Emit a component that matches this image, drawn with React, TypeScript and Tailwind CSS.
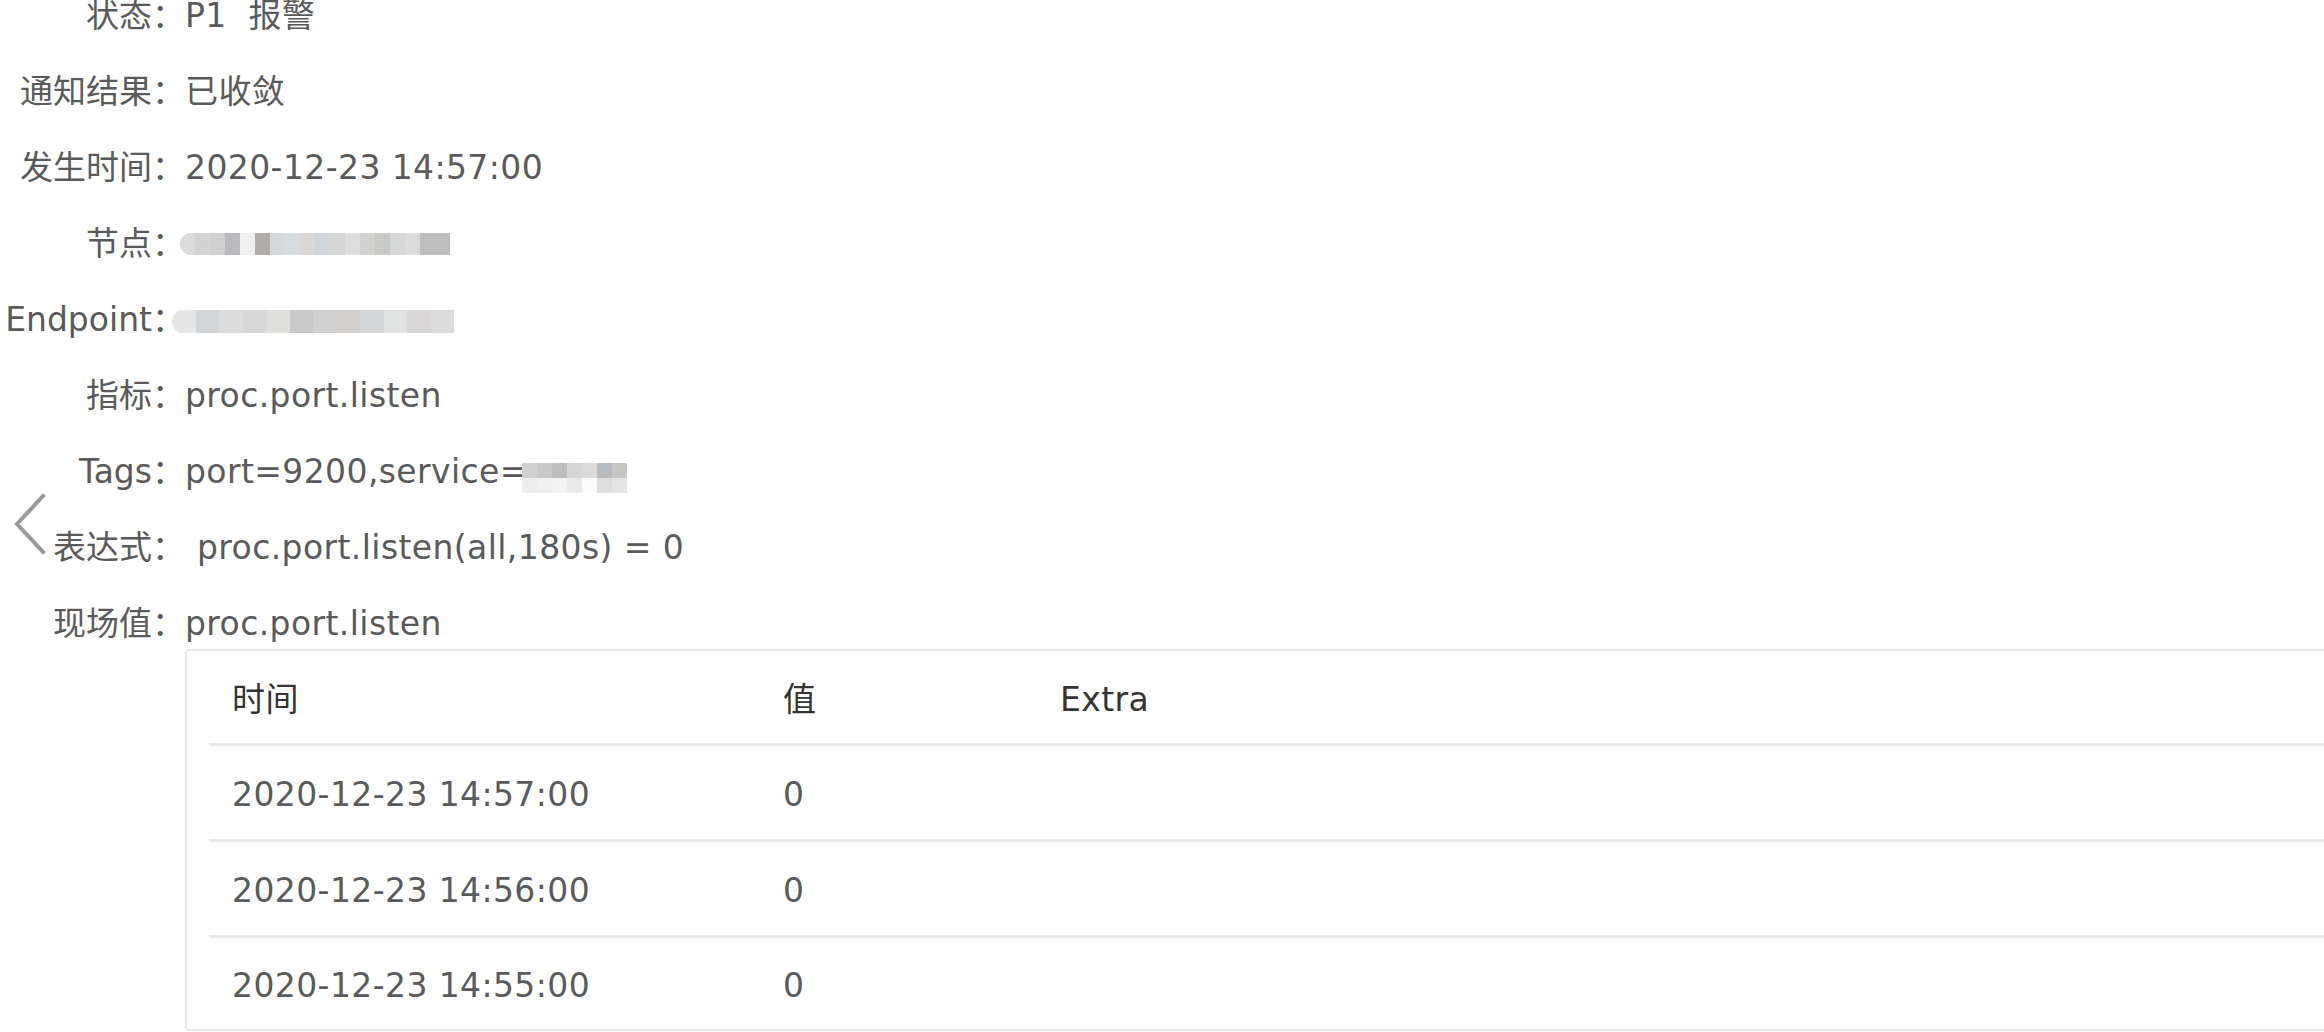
import React from 'react';

type Row = {
  label: string;
  value?: string;
  blur?: 'node' | 'endpoint' | 'tags';
  indent?: boolean;
};

const rows: Row[] = [
  { label: '状态：', value: 'P1  报警' },
  { label: '通知结果：', value: '已收敛' },
  { label: '发生时间：', value: '2020-12-23 14:57:00' },
  { label: '节点：', blur: 'node' },
  { label: 'Endpoint：', blur: 'endpoint' },
  { label: '指标：', value: 'proc.port.listen' },
  { label: 'Tags：', value: 'port=9200,service=', blur: 'tags' },
  { label: '表达式：', value: 'proc.port.listen(all,180s) = 0', indent: true },
  { label: '现场值：', value: 'proc.port.listen' },
];

const samples = [
  { time: '2020-12-23 14:57:00', value: '0' },
  { time: '2020-12-23 14:56:00', value: '0' },
  { time: '2020-12-23 14:55:00', value: '0' },
];

// pixelated blobs standing in for masked hostnames
const nodeBlocks = ['#dcdcdc', '#d3d3d3', '#d1d0d0', '#b9b8bc', '#eef0f0', '#b1ada8', '#d6d8da', '#d5dcde', '#d9d8d6', '#cfd5d8', '#d6d5d3', '#dcdedf', '#d3d1cf', '#c8cac6', '#d6d7d7', '#dddcda', '#bdbdbf', '#bebebf'];
const endpointBlocks = ['#e6e6e6', '#d2d5d7', '#dcdcdd', '#d9d7d8', '#dfe0dc', '#c8c9c8', '#d0d0d1', '#d3d0ce', '#d5d6d8', '#e0e1e1', '#d8d6d7', '#dcdcdd'];
const tagsTop = ['#d0d0d0', '#c8c8c8', '#bdbdbd', '#d6d6d8', '#dcdad8', '#b8bbbe', '#c6c6c4'];
const tagsBottom = ['#ececec', '#f0f0f0', '#f2f2f2', '#e8e9eb', '#fbfbfb', '#dededf', '#e4e4e4'];

const Blocks: React.FC<{ colors: string[]; cell: string; className?: string }> = ({ colors, cell, className = '' }) => (
  <div className={`flex overflow-hidden rounded-l-full blur-[0.6px] ${className}`}>
    {colors.map((c, i) => (
      <div key={i} className={cell} style={{ backgroundColor: c }} />
    ))}
  </div>
);

const Masked: React.FC<{ kind: 'node' | 'endpoint' | 'tags' }> = ({ kind }) => {
  if (kind === 'node') {
    return <Blocks colors={nodeBlocks} cell="h-[22px] w-[15px]" className="-ml-[5px]" />;
  }
  if (kind === 'endpoint') {
    return <Blocks colors={endpointBlocks} cell="h-[23px] w-[23.5px]" className="-ml-[13px] mt-[3px]" />;
  }
  return (
    <div className="-ml-[6px] mt-[12px] flex flex-col blur-[0.6px]">
      <div className="flex">
        {tagsTop.map((c, i) => (
          <div key={i} className="h-[15px] w-[15px]" style={{ backgroundColor: c }} />
        ))}
      </div>
      <div className="flex">
        {tagsBottom.map((c, i) => (
          <div key={i} className="h-[15px] w-[15px]" style={{ backgroundColor: c }} />
        ))}
      </div>
    </div>
  );
};

export default function App() {
  return (
    <div className="relative h-[1032px] w-full overflow-hidden bg-white font-['DejaVu_Sans','Noto_Sans_CJK_SC',sans-serif] text-[33px] tracking-[0.4px] text-[#5a5a5a]">
      <div className="-mt-[22px] flex flex-col">
        {rows.map((row, i) => (
          <div
            key={row.label}
            className={`flex items-center leading-[76px] ${i === rows.length - 1 ? 'h-[63px] items-start' : 'h-[76px]'}`}
          >
            <div className="w-[185px] shrink-0 whitespace-nowrap text-right tracking-normal">{row.label}</div>
            {row.value && (
              <div className={`whitespace-pre ${row.indent ? 'pl-[12px]' : ''}`}>{row.value}</div>
            )}
            {row.blur && <Masked kind={row.blur} />}
          </div>
        ))}
      </div>

      {/* 现场值 table */}
      <div className="ml-[185px] w-[2300px] rounded-[4px] border-2 border-[#e8e8e8] pl-[22px]">
        <div className="flex h-[95px] items-center border-b-[3px] border-[#e8e8e8] pt-[6px] text-[#333]">
          <div className="w-[551px] pl-[23px]">时间</div>
          <div className="w-[277px] pl-[23px]">值</div>
          <div className="pl-[23px]">Extra</div>
        </div>
        {samples.map((s, i) => (
          <div
            key={s.time}
            className={`flex items-center pt-[5px] ${i < samples.length - 1 ? 'h-[96px] border-b-[3px] border-[#e8e8e8]' : 'h-[91px]'}`}
          >
            <div className="w-[551px] pl-[23px]">{s.time}</div>
            <div className="w-[277px] pl-[23px]">{s.value}</div>
            <div className="pl-[23px]" />
          </div>
        ))}
      </div>

      {/* back arrow */}
      <svg
        className="absolute left-[13px] top-[493px]"
        width="34"
        height="62"
        viewBox="0 0 34 62"
        fill="none"
      >
        <path d="M30 3 L4 31 L30 59" stroke="#9a9a9a" strokeWidth="4" strokeLinecap="square" />
      </svg>
    </div>
  );
}
